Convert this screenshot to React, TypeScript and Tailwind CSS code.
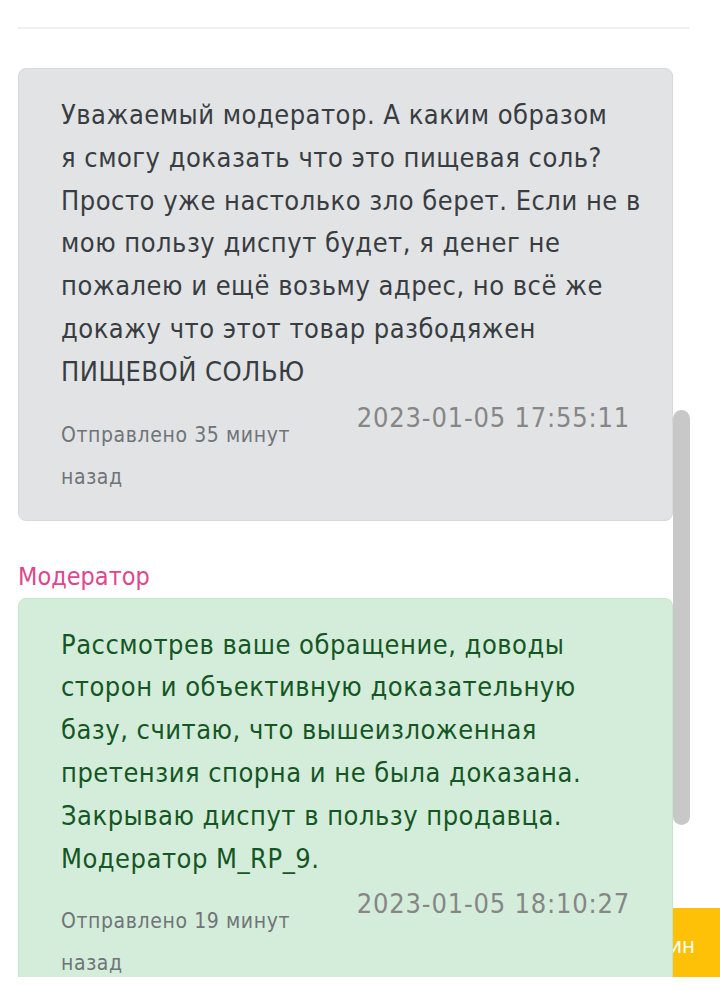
const grayLines = [
  'Уважаемый модератор. А каким образом',
  'я смогу доказать что это пищевая соль?',
  'Просто уже настолько зло берет. Если не в',
  'мою пользу диспут будет, я денег не',
  'пожалею и ещё возьму адрес, но всё же',
  'докажу что этот товар разбодяжен',
  'ПИЩЕВОЙ СОЛЬЮ',
];

const greenLines = [
  'Рассмотрев ваше обращение, доводы',
  'сторон и объективную доказательную',
  'базу, считаю, что вышеизложенная',
  'претензия спорна и не была доказана.',
  'Закрываю диспут в пользу продавца.',
  'Модератор M_RP_9.',
];

function Message({
  lines,
  time,
  ago,
  tone,
}: {
  lines: string[];
  time: string;
  ago: string;
  tone: 'gray' | 'green';
}) {
  const box =
    tone === 'gray'
      ? 'bg-[#e2e3e5] border-[#d6d8db] text-[#383d41]'
      : 'bg-[#d4edda] border-[#c3e6cb] text-[#155724]';
  return (
    <div className={`relative z-10 w-[655px] rounded-[8px] border px-[42px] pt-[25px] pb-[22px] ${box}`}>
      <div className="text-[27px] leading-[42.8px] tracking-[0.5px]">
        {lines.map((l) => (
          <div key={l} className="whitespace-nowrap">
            {l}
          </div>
        ))}
      </div>
      <div className="mt-[6px] flex justify-between">
        <div className="w-[260px] pt-[14px] text-[21px] leading-[42px] tracking-[0.6px] text-[#6f7478]">
          {ago}
        </div>
        <div className="whitespace-nowrap text-[27px] leading-[36px] tracking-[0.8px] text-[#868686]">{time}</div>
      </div>
    </div>
  );
}

export default function App() {
  return (
    <div className="h-[1005px] w-[720px] overflow-hidden bg-white font-['DejaVu_Sans_Condensed','DejaVu_Sans',sans-serif]">
      <div className="relative h-[977px] overflow-hidden">
        <div className="px-[18px] pt-[27px]">
          <div className="h-[2px] w-[672px] bg-[#f0f0f0]" />
          <div className="pt-[39px]">
            <Message
              lines={grayLines}
              time="2023-01-05 17:55:11"
              ago="Отправлено 35 минут назад"
              tone="gray"
            />
          </div>
          <div className="mt-[39px] mb-[4px] text-[25px] leading-[34px] text-[#e0468c]">Модератор</div>
          <Message
            lines={greenLines}
            time="2023-01-05 18:10:27"
            ago="Отправлено 19 минут назад"
            tone="green"
          />
        </div>
        <div className="absolute left-[600px] top-[908px] flex h-[80px] w-[120px] items-center justify-end bg-[#ffc107] pr-[25px] pb-[6px] text-[22px] text-white">
          Админ
        </div>
        <div className="absolute left-[673px] top-[410px] z-20 h-[415px] w-[17px] rounded-full bg-[#c8c8c8]" />
      </div>
      <div className="h-[28px] bg-white" />
    </div>
  );
}
